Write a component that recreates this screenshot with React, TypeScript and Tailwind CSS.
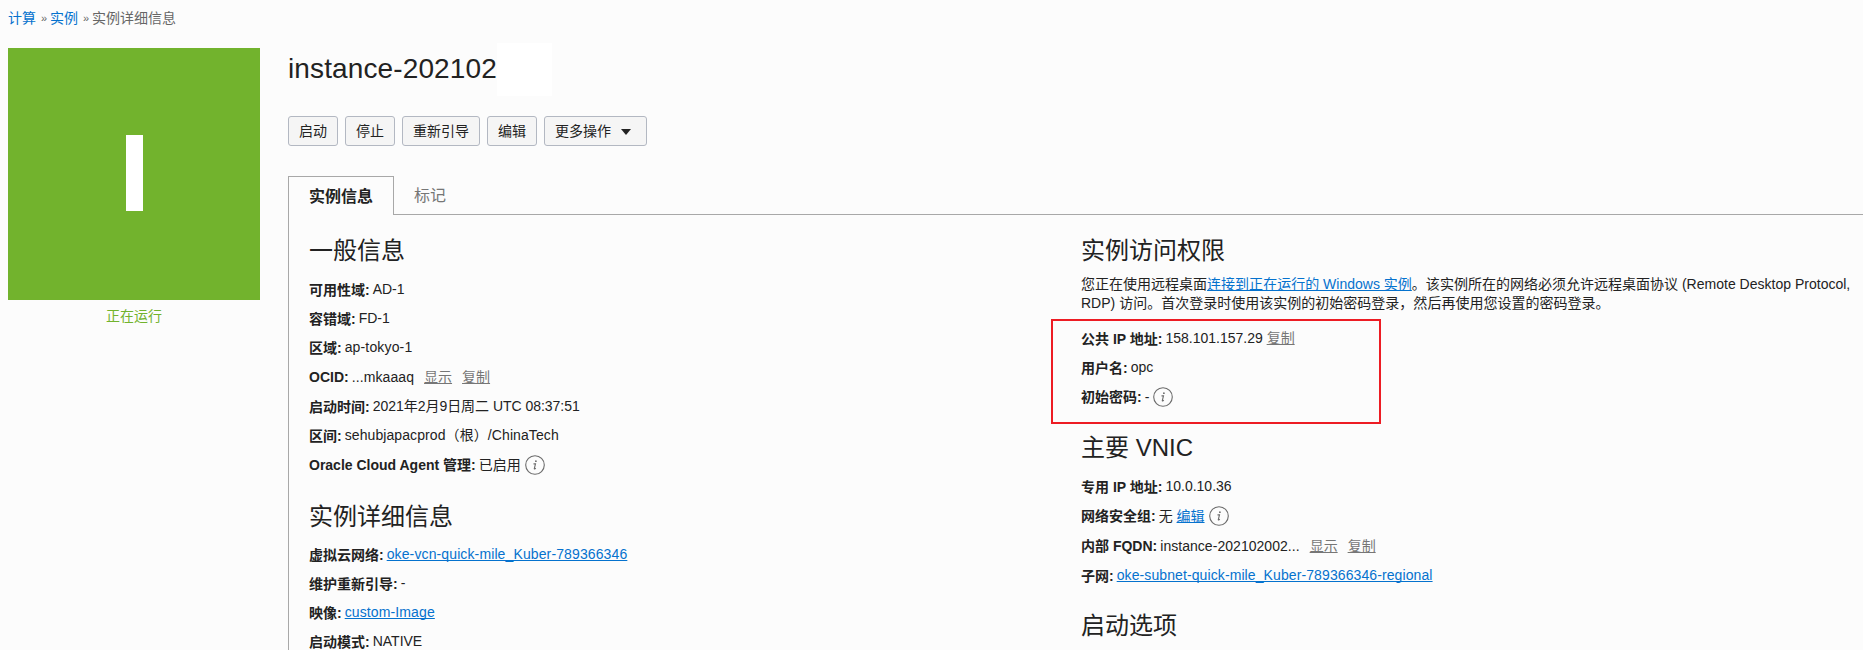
import type { ReactNode } from "react";

function InfoIcon() {
  return (
    <svg className="mt-px ml-1 inline-block size-5 shrink-0" viewBox="0 0 20 20" fill="none">
      <circle cx="10" cy="10" r="9.3" stroke="#6b6b6b" strokeWidth="1.1" />
      <circle cx="10.9" cy="6.2" r="0.9" fill="#6b6b6b" />
      <path d="M8.5 8.9h2l-1.2 4.6c-.1.6.5.6 1.5-.4" stroke="#6b6b6b" strokeWidth="1.1" />
    </svg>
  );
}

function Row({ label, children, className = "h-[29px]" }: { label: string; children: ReactNode; className?: string }) {
  return (
    <div className={`flex items-center whitespace-pre ${className}`}>
      <span className="font-bold">{label}:</span>
      <div className="-mt-px ml-[3px] flex items-center">{children}</div>
    </div>
  );
}

function Link({ children, className = "" }: { children: ReactNode; className?: string }) {
  return <a className={`text-[#0572ce] underline [text-decoration-skip-ink:none] ${className}`}>{children}</a>;
}

function Action({ children, className = "" }: { children: ReactNode; className?: string }) {
  return <a className={`text-[#767676] underline ${className}`}>{children}</a>;
}

function Heading({ children, className = "" }: { children: ReactNode; className?: string }) {
  return <h2 className={`text-2xl leading-9 ${className}`}>{children}</h2>;
}

function Button({ children }: { children: ReactNode }) {
  return (
    <button className="flex h-[30px] items-center rounded-[3px] border border-[#b3b8c2] bg-[#f5f5f5] px-2.5">
      {children}
    </button>
  );
}

function Separator() {
  return <span className="mr-1 ml-[5px] w-[5px] text-[11px] leading-5">»</span>;
}

export default function App() {
  return (
    <div className="h-[650px] w-full overflow-hidden bg-[#fcfcfc] pl-2 font-['Liberation_Sans','Noto_Sans_CJK_SC',sans-serif] text-sm text-[#222]">
      <nav className="flex h-12 items-start pt-2 whitespace-pre text-[#666]">
        <a className="text-[#0572ce]">计算</a>
        <Separator />
        <a className="text-[#0572ce]">实例</a>
        <Separator />
        <span>实例详细信息</span>
      </nav>

      <div className="flex gap-7">
        <aside className="w-[252px] shrink-0">
          <div className="flex h-[252px] items-start justify-center bg-[#72b32d] pt-[87px]">
            <svg className="h-[76px] w-[17px]" viewBox="0 0 17 76">
              <rect width="17" height="76" fill="#fff" />
            </svg>
          </div>
          <p className="mt-1.5 text-center text-[#72b32d]">正在运行</p>
        </aside>

        <main className="min-w-0 flex-1">
          <div className="-mt-[5px] flex h-[53px]">
            <h1 className="w-[209px] pt-2 text-[28px] leading-9 tracking-[0.12px]">instance-202102</h1>
            <span className="w-[55px] bg-white" />
          </div>

          <div className="mt-5 flex gap-[7px]">
            <Button>启动</Button>
            <Button>停止</Button>
            <Button>重新引导</Button>
            <Button>编辑</Button>
            <button className="flex h-[30px] w-[103px] items-center gap-2.5 rounded-[3px] border border-[#b3b8c2] bg-[#f5f5f5] px-2.5">
              更多操作
              <svg className="mt-px h-[6px] w-[10px]" viewBox="0 0 10 6">
                <path d="M0 0h10L5 6z" fill="#222" />
              </svg>
            </button>
          </div>

          <div className="mt-[30px] flex h-[39px] text-base">
            <div className="flex w-[106px] items-center justify-center border-x border-t border-[#a8a8a8] pt-0.5 font-bold">
              实例信息
            </div>
            <div className="flex flex-1 items-center border-b border-[#a8a8a8] pt-0.5 pl-5 text-[#767676]">标记</div>
          </div>

          <div className="flex h-[440px] border-l border-[#a8a8a8] pl-5">
            <section className="w-[772px] pt-[18px]">
              <Heading>一般信息</Heading>
              <div className="mt-[6px]">
                <Row label="可用性域">AD-1</Row>
                <Row label="容错域">FD-1</Row>
                <Row label="区域">
                  <span className="tracking-[0.15px]">ap-tokyo-1</span>
                </Row>
                <Row label="OCID" className="h-[30px]">
                  <span className="tracking-[0.1px]">...mkaaaq</span>
                  <Action className="ml-2.5">显示</Action>
                  <Action className="ml-2.5">复制</Action>
                </Row>
                <Row label="启动时间">
                  <span className="tracking-[-0.03px]">2021年2月9日周二 UTC 08:37:51</span>
                </Row>
                <Row label="区间">
                  <span className="tracking-[0.09px]">sehubjapacprod（根）/ChinaTech</span>
                </Row>
                <Row label="Oracle Cloud Agent 管理" className="h-[30px]">
                  已启用
                  <InfoIcon />
                </Row>
              </div>
              <Heading className="mt-[19px]">实例详细信息</Heading>
              <div className="mt-[5px]">
                <Row label="虚拟云网络">
                  <Link className="tracking-[0.12px]">oke-vcn-quick-mile_Kuber-789366346</Link>
                </Row>
                <Row label="维护重新引导">-</Row>
                <Row label="映像">
                  <Link className="tracking-[0.12px]">custom-Image</Link>
                </Row>
                <Row label="启动模式">NATIVE</Row>
              </div>
            </section>

            <section className="min-w-0 flex-1 pt-[18px]">
              <Heading>实例访问权限</Heading>
              <p className="mt-[6px] leading-[19px] tracking-[0.01px] whitespace-nowrap">
                您正在使用远程桌面<Link>连接到正在运行的 Windows 实例</Link>。该实例所在的网络必须允许远程桌面协议 (Remote Desktop Protocol,
                <br />
                RDP) 访问。首次登录时使用该实例的初始密码登录，然后再使用您设置的密码登录。
              </p>
              <div className="relative mt-[11px]">
                <div className="absolute -top-[5px] -left-[30px] h-[105px] w-[330px] border-2 border-[#ed1c24]" />
                <Row label="公共 IP 地址">
                  158.101.157.29 <Action>复制</Action>
                </Row>
                <Row label="用户名">opc</Row>
                <Row label="初始密码" className="h-[30px]">
                  -<InfoIcon />
                </Row>
              </div>
              <Heading className="mt-[18px]">主要 VNIC</Heading>
              <div className="mt-[6px]">
                <Row label="专用 IP 地址">10.0.10.36</Row>
                <Row label="网络安全组" className="h-[30px]">
                  无 <Link>编辑</Link>
                  <InfoIcon />
                </Row>
                <Row label="内部 FQDN" className="h-[30px]">
                  <span className="tracking-[0.04px]">instance-202102002...</span>
                  <Action className="ml-2.5">显示</Action>
                  <Action className="ml-2.5">复制</Action>
                </Row>
                <Row label="子网">
                  <Link className="tracking-[0.1px]">oke-subnet-quick-mile_Kuber-789366346-regional</Link>
                </Row>
              </div>
              <Heading className="mt-[18px]">启动选项</Heading>
            </section>
          </div>
        </main>
      </div>
    </div>
  );
}
